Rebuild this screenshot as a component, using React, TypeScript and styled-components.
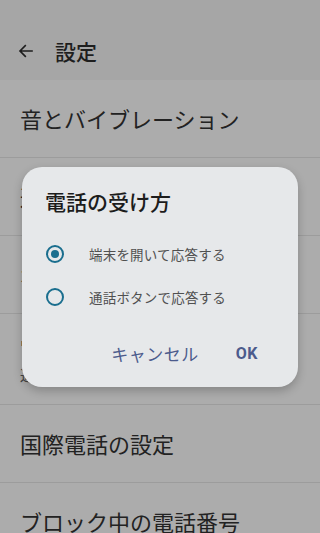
import React from "react";
import styled, { createGlobalStyle } from "styled-components";

const GlobalStyle = createGlobalStyle`
  html, body {
    margin: 0;
    padding: 0;
    background: #acacac;
  }
  body {
    font-family: "Noto Sans CJK JP", "Noto Sans", sans-serif;
    overflow: hidden;
  }
`;

const Screen = styled.div`
  position: relative;
  width: 320px;
  height: 533px;
  overflow: hidden;
  background: #acacac;
`;

const Header = styled.div`
  height: 80px;
  display: flex;
  align-items: center;
  padding: 22px 0 0 16px;
  background: #a6a6a6;
  box-sizing: border-box;
`;

const BackButton = styled.div`
  width: 20px;
  height: 20px;
  display: flex;
  align-items: center;
  justify-content: center;
  margin-right: 19px;
`;

const HeaderTitle = styled.div`
  font-size: 21px;
  font-weight: 500;
  color: #1e1e1e;
  line-height: 1;
`;

const List = styled.div`
  display: flex;
  flex-direction: column;
`;

const Row = styled.div<{ $tall?: boolean }>`
  height: ${(p) => (p.$tall ? 91 : 78)}px;
  box-sizing: border-box;
  padding: 0 20px;
  display: flex;
  flex-direction: column;
  justify-content: center;
  border-bottom: 1px solid #9c9c9c;
`;

const RowTitle = styled.div`
  font-size: 22px;
  color: #222;
  line-height: 1.2;
  white-space: nowrap;
`;

const RowSub = styled.div`
  font-size: 15px;
  color: #444;
  line-height: 1.3;
  margin-top: 6px;
  white-space: nowrap;
`;

const Dialog = styled.div`
  position: absolute;
  top: 167px;
  left: 22px;
  width: 276px;
  height: 220px;
  box-sizing: border-box;
  background: #e6e8ea;
  border-radius: 20px;
  box-shadow: 0 4px 10px rgba(0, 0, 0, 0.22);
  padding: 21px 0 0 0;
  display: flex;
  flex-direction: column;
`;

const DialogTitle = styled.div`
  font-size: 21px;
  font-weight: 500;
  color: #1c1c1c;
  line-height: 26px;
  padding: 0 23px;
`;

const Options = styled.div`
  display: flex;
  flex-direction: column;
  margin-top: 29px;
  gap: 21px;
`;

const Option = styled.div`
  display: flex;
  align-items: center;
  height: 22px;
  padding-left: 24px;
`;

const Radio = styled.div<{ $checked?: boolean }>`
  width: 18px;
  height: 18px;
  box-sizing: border-box;
  border-radius: 50%;
  border: 2px solid #1a6e8e;
  display: flex;
  align-items: center;
  justify-content: center;
  margin-right: 25px;

  &::after {
    content: "";
    display: ${(p) => (p.$checked ? "block" : "none")};
    width: 8px;
    height: 8px;
    border-radius: 50%;
    background: #1a6e8e;
  }
`;

const OptionLabel = styled.div`
  font-size: 13.5px;
  color: #505050;
  letter-spacing: 0.2px;
`;

const Actions = styled.div`
  display: flex;
  justify-content: flex-end;
  align-items: center;
  margin-top: 33px;
  padding-right: 40px;
  gap: 37px;
`;

const ActionButton = styled.div<{ $bold?: boolean }>`
  font-family: ${(p) => (p.$bold ? '"Roboto", "Noto Sans", sans-serif' : '"Noto Sans CJK JP", sans-serif')};
  font-size: ${(p) => (p.$bold ? 16 : 17)}px;
  font-weight: ${(p) => (p.$bold ? 700 : 400)};
  color: #4c5b8c;
  letter-spacing: 0.5px;
`;

function BackArrow() {
  return (
    <svg width="18" height="18" viewBox="0 0 24 24" fill="none">
      <path d="M20 12H5M11 5l-7 7 7 7" stroke="#1e1e1e" strokeWidth="2.2" strokeLinecap="square" />
    </svg>
  );
}

export default function App() {
  return (
    <>
      <GlobalStyle />
      <Screen>
        <Header>
          <BackButton>
            <BackArrow />
          </BackButton>
          <HeaderTitle>設定</HeaderTitle>
        </Header>
        <List>
          <Row>
            <RowTitle>音とバイブレーション</RowTitle>
          </Row>
          <Row>
            <RowTitle>通話アカウント</RowTitle>
          </Row>
          <Row>
            <RowTitle>ボイスメール</RowTitle>
          </Row>
          <Row $tall>
            <RowTitle>電話の受け方</RowTitle>
            <RowSub>通話ボタンで応答する</RowSub>
          </Row>
          <Row>
            <RowTitle>国際電話の設定</RowTitle>
          </Row>
          <Row>
            <RowTitle>ブロック中の電話番号</RowTitle>
          </Row>
        </List>
        <Dialog>
          <DialogTitle>電話の受け方</DialogTitle>
          <Options>
            <Option>
              <Radio $checked />
              <OptionLabel>端末を開いて応答する</OptionLabel>
            </Option>
            <Option>
              <Radio />
              <OptionLabel>通話ボタンで応答する</OptionLabel>
            </Option>
          </Options>
          <Actions>
            <ActionButton>キャンセル</ActionButton>
            <ActionButton $bold>OK</ActionButton>
          </Actions>
        </Dialog>
      </Screen>
    </>
  );
}
